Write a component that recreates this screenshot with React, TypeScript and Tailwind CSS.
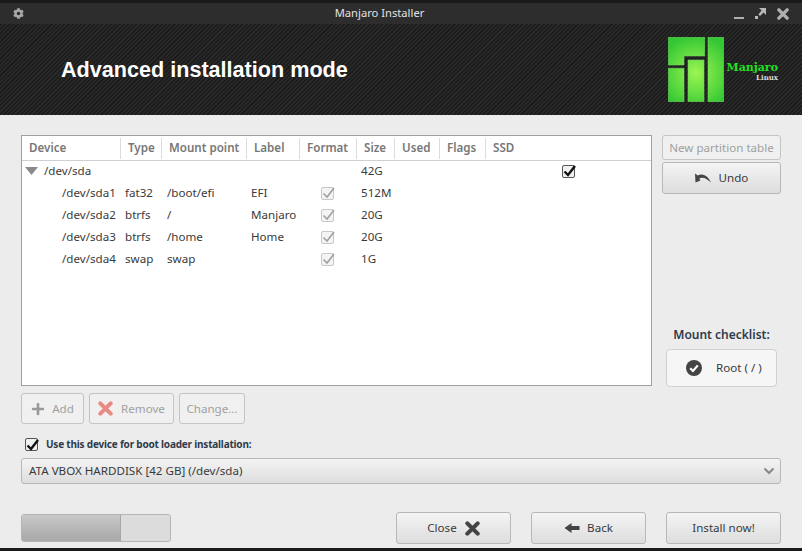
import { FaCog, FaPlus } from "react-icons/fa";

const columns = ["Device", "Type", "Mount point", "Label", "Format", "Size", "Used", "Flags", "SSD"];

const partitions = [
  { device: "/dev/sda1", type: "fat32", mount: "/boot/efi", label: "EFI", size: "512M" },
  { device: "/dev/sda2", type: "btrfs", mount: "/", label: "Manjaro", size: "20G" },
  { device: "/dev/sda3", type: "btrfs", mount: "/home", label: "Home", size: "20G" },
  { device: "/dev/sda4", type: "swap", mount: "swap", label: "", size: "1G" },
];

const gridCols = "grid grid-cols-[99px_41px_85px_53px_57px_38px_45px_46px_1fr]";

const CheckBox = ({ disabled }: { disabled?: boolean }) => (
  <span
    className={`flex h-[13px] w-[13px] items-center justify-center rounded-[2px] border ${
      disabled ? "border-[#c8c8c8] bg-[#f4f4f4]" : "border-[#555] bg-[#f0f0f0]"
    }`}
  >
    <svg viewBox="0 0 14 14" className="h-[14px] w-[14px] overflow-visible">
      <path
        d="M2.5 7.5 L6 11 L13 2"
        fill="none"
        stroke={disabled ? "#a0a0a0" : "#111"}
        strokeWidth={disabled ? 1.6 : 2.4}
      />
    </svg>
  </span>
);

const Logo = () => (
  <div className="flex items-end">
    <svg viewBox="0 0 56 65" className="h-[65px] w-[56px]">
      <defs>
        <radialGradient id="g" gradientUnits="userSpaceOnUse" cx="28" cy="36" r="38">
          <stop offset="0" stopColor="#9cf552" />
          <stop offset="1" stopColor="#33c733" />
        </radialGradient>
      </defs>
      <g fill="url(#g)" stroke="#6fdc5f" strokeWidth="0.6">
        <path d="M0.3 0.3H36.7V19H16V28H0.3Z" />
        <path d="M0.3 31.3H16V64.7H0.3Z" />
        <path d="M20 23H36V64.7H20Z" />
        <path d="M40 0.3H55.7V64.7H40Z" />
      </g>
    </svg>
    <div className="mb-[21px] ml-[2px] flex flex-col items-end font-['DejaVu_Serif',serif] font-bold leading-none">
      <span className="text-[11px] text-[#22e022]">Manjaro</span>
      <span className="mt-[1px] text-[7px] text-[#dddddd]">Linux</span>
    </div>
  </div>
);

const Button = ({
  children,
  className,
  disabled,
}: {
  children: React.ReactNode;
  className: string;
  disabled?: boolean;
}) => (
  <div
    className={`flex items-center rounded-[3px] border ${
      disabled
        ? "border-[#c4c4c4] bg-[#f0f0f0] text-[#a0a0a0]"
        : "border-[#b8b8b8] bg-gradient-to-b from-[#f4f4f4] to-[#dddddd] text-[#3a3a3a]"
    } ${className}`}
  >
    {children}
  </div>
);

const XIcon = ({ color, size }: { color: string; size: number }) => (
  <svg viewBox="0 0 16 16" width={size} height={size}>
    <path d="M2.5 2.5 L13.5 13.5 M13.5 2.5 L2.5 13.5" stroke={color} strokeWidth="4.4" strokeLinecap="round" />
  </svg>
);

export default function App() {
  return (
    <div className="flex h-[551px] w-[802px] flex-col overflow-hidden bg-[#1a1a1a] pb-[3px] pt-[3px] font-['Noto_Sans',sans-serif] text-[11.6px] text-[#3a3a3a]">
      {/* title bar */}
      <div className="relative flex h-[21px] items-center justify-between bg-[#2d2d2d] px-[13px]">
        <FaCog className="text-[#a8a8a8]" size={11} />
        <span className="absolute left-0 right-[43px] text-center text-[11.2px] text-[#e2e2e2]">Manjaro Installer</span>
        <div className="flex items-center gap-[11px]">
          <span className="mt-[9px] h-[2px] w-[10px] bg-[#b0b0b0]" />
          <svg viewBox="0 0 11 11" className="h-[11px] w-[11px]">
            <path d="M4 0H11V7L8.6 4.6L5 8L3.4 6.4L6.6 2.6ZM0 8H3V11H0Z" fill="#b8b8b8" />
          </svg>
          <XIcon color="#b0b0b0" size={12} />
        </div>
      </div>

      {/* header */}
      <div className="flex h-[91px] items-center justify-between bg-[repeating-linear-gradient(135deg,#1c1c1c_0,#1c1c1c_1.5px,#292929_1.5px,#292929_3px)] pl-[61px] pr-[24px]">
        <h1 className="mt-[2px] font-['Liberation_Sans',sans-serif] text-[21.6px] font-bold text-white">
          Advanced installation mode
        </h1>
        <Logo />
      </div>

      {/* content */}
      <div className="flex flex-1 flex-col bg-[#ececec] px-[21px] pt-[20px]">
        <div className="flex h-[251px] gap-[10px]">
          <div className="flex-1 border border-[#a0a0a0] bg-white">
            <div className={`${gridCols} h-[25px] items-center border-b border-[#d0d0d0] font-semibold text-[#777]`}>
              {columns.map((c, i) => (
                <div
                  key={c}
                  className={`flex h-[21px] items-center pl-[7px] ${i < columns.length - 1 ? "border-r border-[#dcdcdc]" : ""}`}
                >
                  {c}
                </div>
              ))}
            </div>
            <div className={`${gridCols} -mt-px h-[22px] items-center`}>
              <div className="col-span-5 flex items-center pl-[3px]">
                <svg viewBox="0 0 13 8" className="h-[8px] w-[13px]">
                  <path d="M0 0H13L6.5 8Z" fill="#8a8a8a" />
                </svg>
                <span className="ml-[6px]">/dev/sda</span>
              </div>
              <div className="pl-[4px]">42G</div>
              <div className="col-span-2" />
              <div className="pl-[76px]">
                <CheckBox />
              </div>
            </div>
            {partitions.map((p) => (
              <div key={p.device} className={`${gridCols} h-[22px] items-center`}>
                <div className="pl-[40px]">{p.device}</div>
                <div className="pl-[4px]">{p.type}</div>
                <div className="pl-[5px]">{p.mount}</div>
                <div className="pl-[4px]">{p.label}</div>
                <div className="pl-[21px]">
                  <CheckBox disabled />
                </div>
                <div className="pl-[4px]">{p.size}</div>
              </div>
            ))}
          </div>

          <div className="flex w-[119px] flex-col">
            <Button disabled className="h-[25px] justify-center">
              New partition table
            </Button>
            <Button className="mt-[2px] h-[32px] justify-center gap-[8px]">
              <svg viewBox="0 0 16 10" className="h-[10px] w-[16px]">
                <path d="M0 0.5L0.5 9.5L5.5 7.6L4.2 5.6C7.5 3.6 11 4.6 16 9.5C13 3.2 8 0 2.8 2.4Z" fill="#444" />
              </svg>
              Undo
            </Button>
            <div className="mb-[-1px] mt-auto flex flex-col items-center">
              <span className="text-[12px] font-semibold text-[#2f3b4a]">Mount checklist:</span>
              <div className="mt-[5px] flex h-[38px] w-[111px] items-center rounded-[4px] border border-[#d0d0d0] bg-[#f6f6f6] pl-[19px]">
                <svg viewBox="0 0 16 16" className="h-[16px] w-[16px]">
                  <circle cx="8" cy="8" r="8" fill="#444" />
                  <path d="M4.2 8.2L7 11L11.8 5.4" fill="none" stroke="#fff" strokeWidth="2.2" />
                </svg>
                <span className="ml-[14px]">Root ( / )</span>
              </div>
            </div>
          </div>
        </div>

        <div className="mt-[7px] flex gap-[5px]">
          <Button disabled className="h-[31px] w-[63px] justify-center gap-[7px]">
            <FaPlus className="text-[#999]" size={14} />
            Add
          </Button>
          <Button disabled className="h-[31px] w-[85px] justify-center gap-[8px]">
            <XIcon color="#e98b85" size={15} />
            Remove
          </Button>
          <Button disabled className="h-[31px] w-[66px] justify-center">
            Change...
          </Button>
        </div>

        <div className="mt-[13px] flex items-center pl-[4px]">
          <CheckBox />
          <span className="ml-[8px] text-[10px] font-bold tracking-[-0.2px] text-[#2f3b4a]">
            Use this device for boot loader installation:
          </span>
        </div>

        <Button className="mt-[6px] h-[26px] justify-between pl-[7px] pr-[5px]">
          <span>ATA VBOX HARDDISK [42 GB] (/dev/sda)</span>
          <svg viewBox="0 0 12 8" className="h-[8px] w-[12px]">
            <path d="M1.5 1.5L6 6L10.5 1.5" fill="none" stroke="#888" strokeWidth="2" />
          </svg>
        </Button>

        <div className="mt-[28px] flex items-center">
          <div className="h-[28px] w-[150px] overflow-hidden rounded-[3px] border border-[#b4b4b4] bg-[#dcdcdc]">
            <div className="h-full w-[99px] border-r border-[#a8a8a8] bg-gradient-to-b from-[#c8c8c8] to-[#a8a8a8]" />
          </div>
          <div className="ml-auto flex gap-[20px]">
            <Button className="h-[32px] w-[115px] justify-center gap-[8px]">
              Close
              <XIcon color="#444" size={15} />
            </Button>
            <Button className="h-[32px] w-[115px] justify-center gap-[7px]">
              <svg viewBox="0 0 15 10" className="h-[10px] w-[16px]">
                <path d="M0 5L7 0V3H15V7H7V10Z" fill="#444" />
              </svg>
              Back
            </Button>
            <Button className="h-[32px] w-[115px] justify-center">Install now!</Button>
          </div>
        </div>
      </div>
    </div>
  );
}
